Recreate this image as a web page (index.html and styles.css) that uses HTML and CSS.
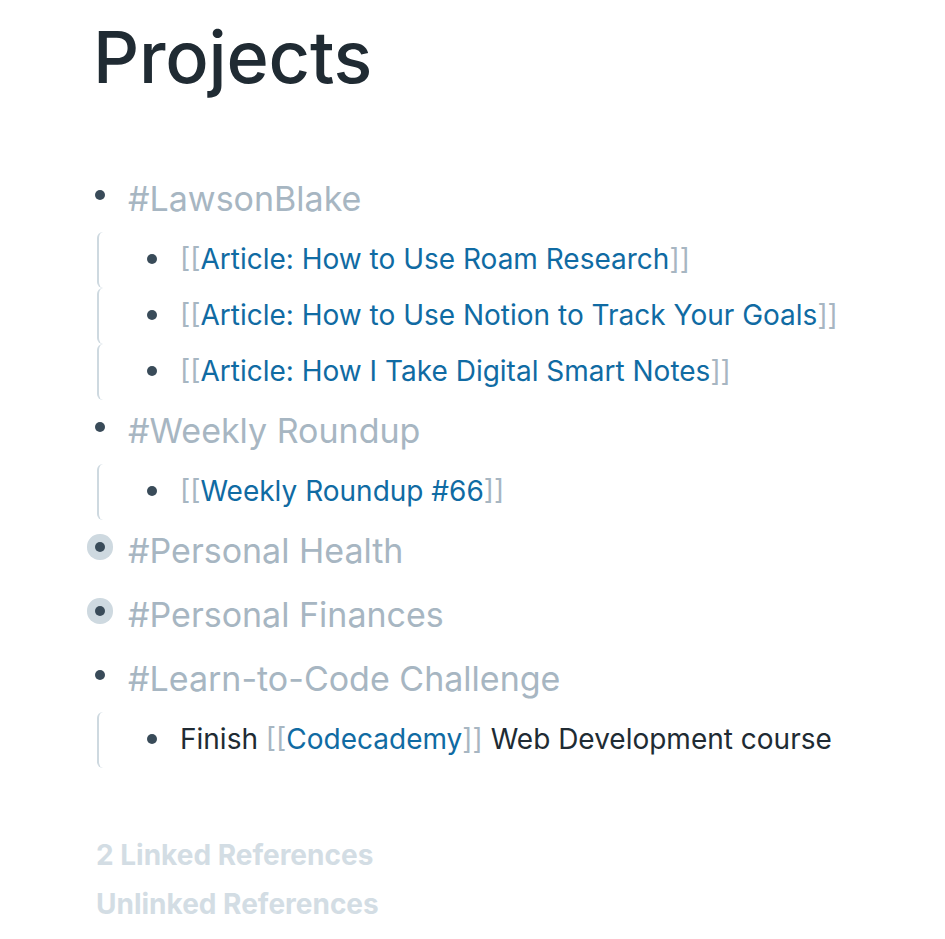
FILE: index.html
```html
<!DOCTYPE html>
<html>
<head>
<meta charset="utf-8">
<link rel="stylesheet" href="styles.css">
</head>
<body>
<div class="page">
  <h1 class="title">Projects</h1>
  <div class="blocks">
    <div class="block">
      <div class="row top"><span class="bullet-wrap"><span class="bullet"></span></span><span class="tag">#LawsonBlake</span></div>
      <div class="children">
        <div class="child"><div class="row sub"><span class="bullet-wrap"><span class="bullet"></span></span><span class="text"><span class="br">[[</span><span class="link">Article: How to Use Roam Research</span><span class="br">]]</span></span></div></div>
        <div class="child"><div class="row sub"><span class="bullet-wrap"><span class="bullet"></span></span><span class="text"><span class="br">[[</span><span class="link">Article: How to Use Notion to Track Your Goals</span><span class="br">]]</span></span></div></div>
        <div class="child"><div class="row sub"><span class="bullet-wrap"><span class="bullet"></span></span><span class="text"><span class="br">[[</span><span class="link">Article: How I Take Digital Smart Notes</span><span class="br">]]</span></span></div></div>
      </div>
    </div>
    <div class="block">
      <div class="row top"><span class="bullet-wrap"><span class="bullet"></span></span><span class="tag">#Weekly Roundup</span></div>
      <div class="children">
        <div class="child"><div class="row sub"><span class="bullet-wrap"><span class="bullet"></span></span><span class="text"><span class="br">[[</span><span class="link">Weekly Roundup #66</span><span class="br">]]</span></span></div></div>
      </div>
    </div>
    <div class="block">
      <div class="row top"><span class="bullet-wrap"><span class="bullet collapsed"></span></span><span class="tag">#Personal Health</span></div>
    </div>
    <div class="block">
      <div class="row top"><span class="bullet-wrap"><span class="bullet collapsed"></span></span><span class="tag">#Personal Finances</span></div>
    </div>
    <div class="block">
      <div class="row top"><span class="bullet-wrap"><span class="bullet"></span></span><span class="tag">#Learn-to-Code Challenge</span></div>
      <div class="children">
        <div class="child"><div class="row sub"><span class="bullet-wrap"><span class="bullet"></span></span><span class="text">Finish <span class="br">[[</span><span class="link">Codecademy</span><span class="br">]]</span> Web Development course</span></div></div>
      </div>
    </div>
  </div>
  <div class="refs">
    <div class="ref">2 Linked References</div>
    <div class="ref">Unlinked References</div>
  </div>
</div>
</body>
</html>
```

FILE: styles.css
```css
* { box-sizing: border-box; }
html, body { margin: 0; padding: 0; background: #ffffff; }
body {
  font-family: Inter, "Noto Sans", sans-serif;
  color: #202b33;
}
.page {
  padding-left: 88px;
  width: 945px;
  height: 939px;
  overflow: hidden;
}
.title {
  margin: 0;
  padding-left: 5px;
  font-size: 72px;
  font-weight: 500;
  line-height: 114px;
  height: 168px;
  color: #202b33;
  letter-spacing: -0.2px;
}
.row {
  display: flex;
  align-items: center;
}
.row.top { height: 64px; }
.row.sub { height: 56px; }
.bullet-wrap {
  width: 24px;
  height: 24px;
  display: flex;
  align-items: center;
  justify-content: center;
  flex: none;
  margin-right: 16px;
}
.row.top .bullet-wrap { margin-top: -10px; }
.row.sub .bullet-wrap { margin-top: -3px; }
.bullet {
  width: 10px;
  height: 10px;
  border-radius: 50%;
  background: #394b59;
}
.bullet.collapsed {
  box-shadow: 0 0 0 8px #ced9e0;
}
.tag {
  font-size: 34px;
  color: #a7b6c2;
  margin-top: -3px;
}
.children {
  margin-left: 9px;
}
.child {
  border-left: 2px solid #ced9e0;
  border-radius: 6px;
  padding-left: 41px;
}
.text {
  font-size: 28px;
  color: #202b33;
  white-space: nowrap;
  margin-top: -2px;
}
.link { color: #106ba3; }
.br { color: #a7b6c2; }
.refs {
  padding-top: 63px;
  padding-left: 8px;
}
.ref {
  font-size: 28px;
  font-weight: 700;
  color: #d3dde4;
  line-height: 49px;
}
```
